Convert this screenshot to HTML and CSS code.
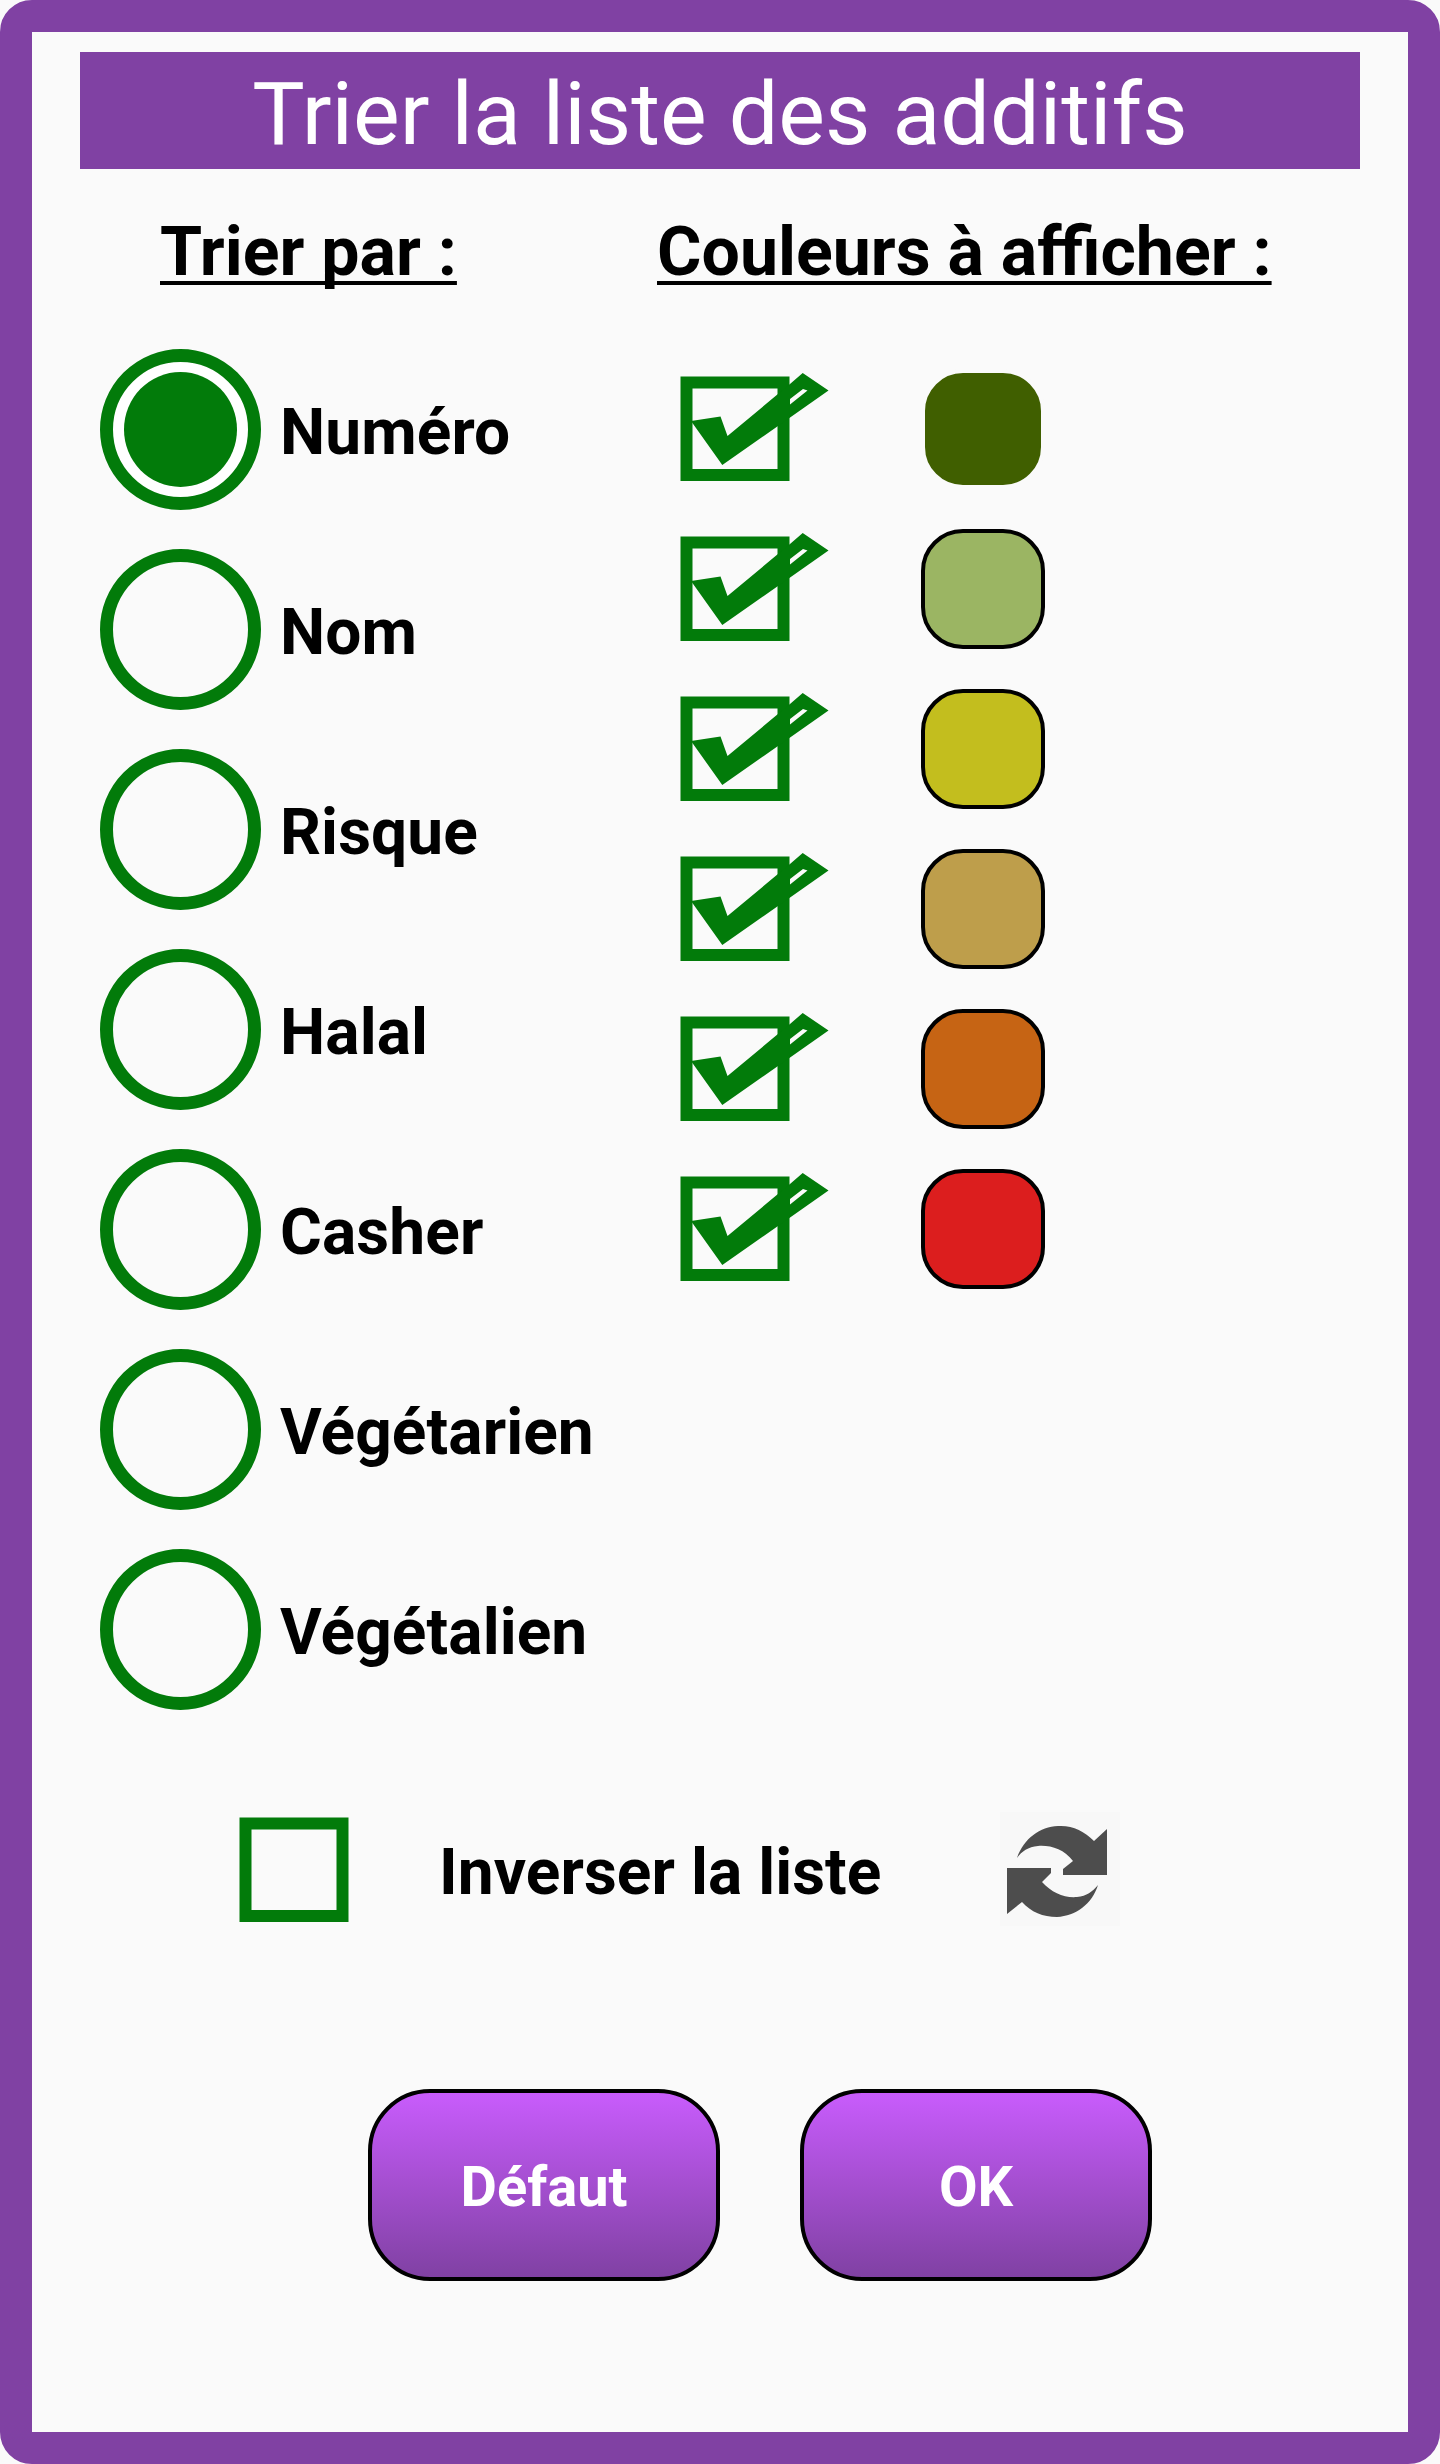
FILE: index.html
```
<!DOCTYPE html>
<html lang="fr">
<head>
  <meta charset="utf-8">
  <title>Trier la liste des additifs</title>
  <link rel="stylesheet" href="styles.css">
</head>
<body>
  <!-- Formes réutilisées par les lignes -->
  <svg class="symbols">
    <symbol id="checked" viewBox="0 0 160 120">
      <path class="box" d="M14.500 13.500h97v92.500h-97z"/>
      <path class="tick" fill-rule="evenodd" d="M19 52 L48.500 47.500 L55.500 67 L118 15 L130.700 4 L156.500 21.500 L50.300 96 Z M118 30 L131 20 L135.500 21.500 L118 35.500 Z"/>
    </symbol>
    <symbol id="unchecked" viewBox="0 0 160 120">
      <path class="box" d="M14.500 13.500h97v92.500h-97z"/>
    </symbol>
  </svg>

  <div id="sortDialog">
    <h1>Trier la liste des additifs</h1>

    <div class="columns">
      <div class="sortColumn">
        <h2>Trier par :</h2>
        <div class="sortItem"><span class="radio selected"></span><span class="label">Numéro</span></div>
        <div class="sortItem"><span class="radio"></span><span class="label">Nom</span></div>
        <div class="sortItem"><span class="radio"></span><span class="label">Risque</span></div>
        <div class="sortItem"><span class="radio"></span><span class="label">Halal</span></div>
        <div class="sortItem"><span class="radio"></span><span class="label">Casher</span></div>
        <div class="sortItem"><span class="radio"></span><span class="label">Végétarien</span></div>
        <div class="sortItem"><span class="radio"></span><span class="label">Végétalien</span></div>
      </div>

      <div class="colorColumn">
        <h2>Couleurs à afficher :</h2>
        <div class="colorItem"><svg class="check"><use href="#checked"/></svg><span class="swatch darkGreen"></span></div>
        <div class="colorItem"><svg class="check"><use href="#checked"/></svg><span class="swatch lightGreen"></span></div>
        <div class="colorItem"><svg class="check"><use href="#checked"/></svg><span class="swatch yellow"></span></div>
        <div class="colorItem"><svg class="check"><use href="#checked"/></svg><span class="swatch sand"></span></div>
        <div class="colorItem"><svg class="check"><use href="#checked"/></svg><span class="swatch orange"></span></div>
        <div class="colorItem"><svg class="check"><use href="#checked"/></svg><span class="swatch red"></span></div>
      </div>
    </div>

    <div class="invertRow">
      <svg class="check"><use href="#unchecked"/></svg>
      <span class="invertLabel">Inverser la liste</span>
      <svg class="refresh" viewBox="0 0 120 114">
        <path d="M17 46 C24 26 40 15 58 14 C72 13 84 19 94 29 L107 17 V63 H63 V57 L73 49 C64 37 50 33 38 34 C28 35 22 39 17 46 Z"/>
        <path d="M7 56 H51 V61 L42 70 C52 81 64 86 77 85 C87 84 92 80 98 73 C92 92 76 104 57 105 C43 105 31 100 22 90 L7 102 Z"/>
      </svg>
    </div>

    <div class="buttons">
      <button id="defaultButton">Défaut</button>
      <button id="okButton">OK</button>
    </div>
  </div>
</body>
</html>
```

FILE: styles.css
```
* {
  box-sizing: border-box;
}

body {
  margin: 0;
  background-color: #fafafa;
  font-family: Roboto, sans-serif;
  color: black;
}

#sortDialog {
  height: 2464px;
  padding: 20px 48px;
  /* cadre violet : arrondi dehors, droit dedans */
  border: 32px solid #8041a3;
  border-radius: 32px;
}

.symbols {
  display: none;
}

h1 {
  margin: 0;
  height: 117px;
  line-height: 123px;
  background-color: #8041a3;
  color: white;
  font-size: 88px;
  font-weight: 400;
  letter-spacing: 0.06px;
  text-align: center;
}

h2 {
  margin: 0;
  height: 160px;
  padding-top: 43px;
  font-size: 68px;
  font-weight: 700;
  line-height: 80px;
  white-space: nowrap;
  text-decoration: underline;
  text-decoration-thickness: 4px;
  text-decoration-skip-ink: none;
  text-underline-offset: 6px;
}

.columns {
  display: flex;
  height: 1604px;
}

.sortColumn {
  width: 577px;
}

.sortColumn h2 {
  padding-left: 80px;
}

.sortItem {
  display: flex;
  align-items: center;
  gap: 19px;
  height: 200px;
  padding-left: 20px;
}

.label {
  padding-top: 8px;
  font-size: 64px;
  font-weight: 700;
  line-height: 80px;
  letter-spacing: 0.1px;
}

.radio {
  width: 161px;
  height: 161px;
  border: 13px solid #027b0a;
  border-radius: 50%;
}

.selected {
  padding: 10px 11px;
  background-color: white;
}

.selected::before {
  content: "";
  display: block;
  height: 100%;
  border-radius: 50%;
  background-color: #027b0a;
}

.colorItem {
  display: flex;
  align-items: center;
  gap: 89px;
  height: 160px;
  padding-left: 15px;
}

.colorItem:nth-child(2) {
  margin-top: 20px;
}

.check {
  width: 160px;
  height: 120px;
}

.box {
  fill: none;
  stroke: #027b0a;
  stroke-width: 12px;
}

.tick {
  fill: #027b0a;
}

.swatch {
  width: 124px;
  height: 120px;
  border: 4px solid black;
  border-radius: 42px;
}

.darkGreen {
  background-color: #405f00;
  border-color: #fafafa;
}

.lightGreen {
  background-color: #9bb563;
}

.yellow {
  background-color: #c3be1e;
}

.sand {
  background-color: #be9e4b;
}

.orange {
  background-color: #c66414;
}

.red {
  background-color: #dc1e1e;
}

.invertRow {
  display: flex;
  align-items: center;
  height: 200px;
  padding-left: 151px;
}

.invertRow .check {
  margin-bottom: 7px;
}

.invertLabel {
  width: 561px;
  margin-left: 48px;
  padding-bottom: 2px;
  font-size: 64px;
  font-weight: 700;
  letter-spacing: 0.06px;
  white-space: nowrap;
}

.refresh {
  width: 120px;
  height: 114px;
  margin-bottom: 8px;
  background-color: #f8f8f8;
  fill: #4d4d4d;
}

.buttons {
  display: flex;
  gap: 80px;
  margin-top: 116px;
  padding-left: 288px;
}

.buttons button {
  width: 352px;
  height: 192px;
  padding: 4px 0 0;
  border: 4px solid black;
  border-radius: 62px;
  background: linear-gradient(#c85cfc, #8041a3);
  color: white;
  font-family: inherit;
  font-size: 56px;
  font-weight: 700;
  cursor: pointer;
}
```
